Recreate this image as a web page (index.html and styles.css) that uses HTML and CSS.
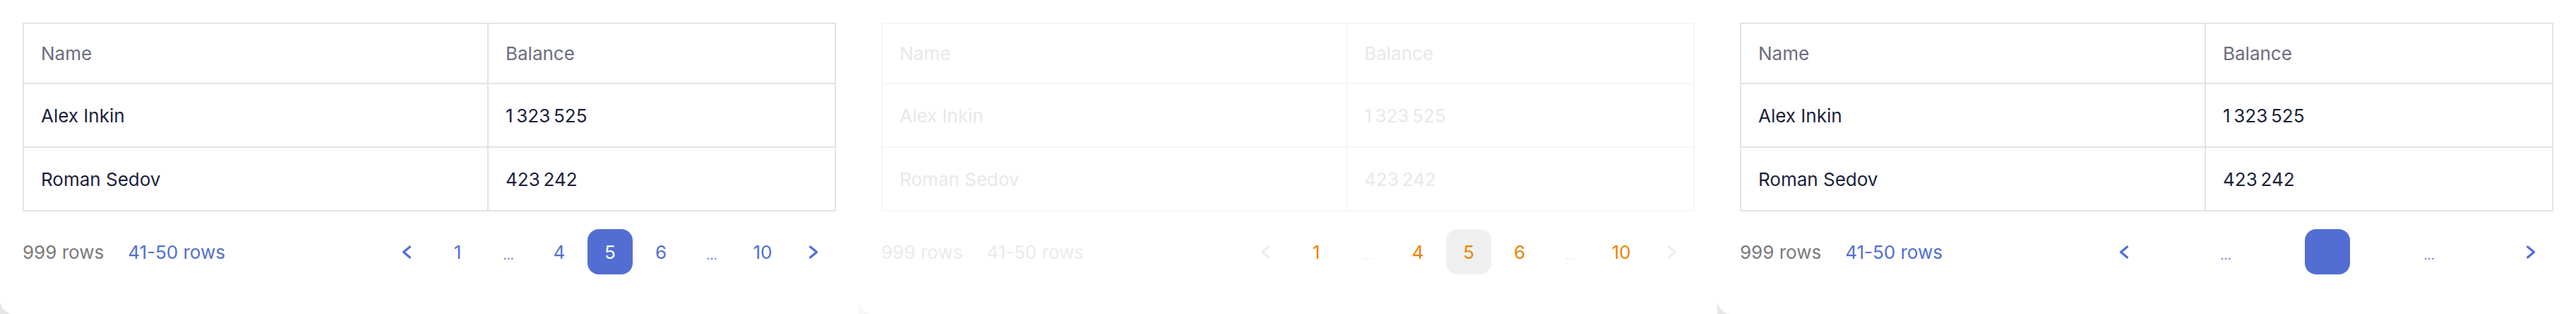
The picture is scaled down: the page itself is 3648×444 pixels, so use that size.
FILE: index.html
```html
<!DOCTYPE html>
<html lang="en">
<head>
<meta charset="utf-8">
<title>Table pagination</title>
<link rel="stylesheet" href="styles.css">
</head>
<body>
<div class="board">
  <section class="slot">
    <div class="card">
      <div class="table" role="table">
        <div class="cell cell_head" role="columnheader">Name</div>
        <div class="cell cell_head" role="columnheader">Balance</div>
        <div class="cell" role="cell">Alex Inkin</div>
        <div class="cell" role="cell">1&#8201;323&#8201;525</div>
        <div class="cell" role="cell">Roman Sedov</div>
        <div class="cell" role="cell">423&#8201;242</div>
      </div>
      <div class="footer">
        <div class="meta"><span class="total">999 rows</span><a class="range">41-50 rows</a></div>
        <nav class="pages">
          <button class="page page_arrow"><svg viewBox="0 0 32 32" width="32" height="32"><path d="M20.5 9 L11.5 16.5 L20.5 24"/></svg></button>
          <button class="page">1</button>
          <span class="page page_dots">…</span>
          <button class="page">4</button>
          <button class="page page_active">5</button>
          <button class="page">6</button>
          <span class="page page_dots">…</span>
          <button class="page">10</button>
          <button class="page page_arrow"><svg viewBox="0 0 32 32" width="32" height="32"><path d="M11.5 9 L20.5 16.5 L11.5 24"/></svg></button>
        </nav>
      </div>
    </div>
  </section>

  <section class="slot slot_faded">
    <div class="card card_faded">
      <div class="table" role="table">
        <div class="cell cell_head" role="columnheader">Name</div>
        <div class="cell cell_head" role="columnheader">Balance</div>
        <div class="cell" role="cell">Alex Inkin</div>
        <div class="cell" role="cell">1&#8201;323&#8201;525</div>
        <div class="cell" role="cell">Roman Sedov</div>
        <div class="cell" role="cell">423&#8201;242</div>
      </div>
      <div class="footer">
        <div class="meta"><span class="total">999 rows</span><a class="range">41-50 rows</a></div>
        <nav class="pages">
          <button class="page page_arrow"><svg viewBox="0 0 32 32" width="32" height="32"><path d="M20.5 9 L11.5 16.5 L20.5 24"/></svg></button>
          <button class="page">1</button>
          <span class="page page_dots">…</span>
          <button class="page">4</button>
          <button class="page page_active">5</button>
          <button class="page">6</button>
          <span class="page page_dots">…</span>
          <button class="page">10</button>
          <button class="page page_arrow"><svg viewBox="0 0 32 32" width="32" height="32"><path d="M11.5 9 L20.5 16.5 L11.5 24"/></svg></button>
        </nav>
      </div>
    </div>
  </section>

  <section class="slot">
    <div class="card">
      <div class="table" role="table">
        <div class="cell cell_head" role="columnheader">Name</div>
        <div class="cell cell_head" role="columnheader">Balance</div>
        <div class="cell" role="cell">Alex Inkin</div>
        <div class="cell" role="cell">1&#8201;323&#8201;525</div>
        <div class="cell" role="cell">Roman Sedov</div>
        <div class="cell" role="cell">423&#8201;242</div>
      </div>
      <div class="footer">
        <div class="meta"><span class="total">999 rows</span><a class="range">41-50 rows</a></div>
        <nav class="pages">
          <button class="page page_arrow"><svg viewBox="0 0 32 32" width="32" height="32"><path d="M20.5 9 L11.5 16.5 L20.5 24"/></svg></button>
          <button class="page"></button>
          <span class="page page_dots">…</span>
          <button class="page"></button>
          <button class="page page_active"></button>
          <button class="page"></button>
          <span class="page page_dots">…</span>
          <button class="page"></button>
          <button class="page page_arrow"><svg viewBox="0 0 32 32" width="32" height="32"><path d="M11.5 9 L20.5 16.5 L11.5 24"/></svg></button>
        </nav>
      </div>
    </div>
  </section>
</div>
</body>
</html>
```

FILE: styles.css
```css
* {
  box-sizing: border-box;
}

body {
  margin: 0;
  background: #ffffff;
  font-family: Inter, "Noto Sans", sans-serif;
}

.board {
  display: flex;
  width: 3648px;
  height: 444px;
}

.slot {
  width: 1216px;
  height: 444px;
  flex: none;
  background: #e6e6e6;
}

.slot_faded {
  background: #f7f7f7;
}

.card {
  height: 100%;
  background: #ffffff;
  border-bottom-left-radius: 20px;
  padding: 32px;
  display: flex;
  flex-direction: column;
  gap: 25px;
}

.table {
  display: grid;
  grid-template-columns: 658px 1fr;
  border-top: 2px solid #e3e3e3;
  border-left: 2px solid #e3e3e3;
}

.cell {
  height: 90px;
  padding: 0 24px;
  display: flex;
  align-items: center;
  border-right: 2px solid #e3e3e3;
  border-bottom: 2px solid #e3e3e3;
  font-size: 26px;
  color: #1b1f3b;
}

.cell_head {
  height: 85px;
  color: #6b6d80;
}

.footer {
  height: 64px;
  display: flex;
  align-items: center;
  justify-content: space-between;
}

.meta {
  display: flex;
  align-items: center;
  gap: 34px;
  font-size: 26px;
}

.total {
  color: #7a7a7a;
}

.range {
  color: #526ed3;
  text-decoration: none;
}

.pages {
  display: flex;
  gap: 8px;
}

.page {
  width: 64px;
  height: 64px;
  padding: 0;
  border: 0;
  border-radius: 16px;
  background: transparent;
  display: flex;
  align-items: center;
  justify-content: center;
  font-family: inherit;
  font-size: 26px;
  color: #526ed3;
}

.page svg {
  fill: none;
  stroke: currentColor;
  stroke-width: 3.2;
  stroke-linecap: round;
  stroke-linejoin: round;
}

.page_active {
  background: #526ed3;
  color: #ffffff;
}

.page_dots {
  font-size: 18px;
  padding-top: 8px;
}

/* faded (disabled) variant */
.card_faded .table,
.card_faded .cell {
  border-color: #f6f6f6;
}

.card_faded .cell,
.card_faded .cell_head {
  color: #e8e8e8;
}

.card_faded .total,
.card_faded .range {
  color: #ebebeb;
}

.card_faded .page {
  color: #ef8200;
}

.card_faded .page_arrow,
.card_faded .page_dots {
  color: #ededed;
}

.card_faded .page_active {
  background: #f0f0f0;
  color: #ef8200;
}
```
